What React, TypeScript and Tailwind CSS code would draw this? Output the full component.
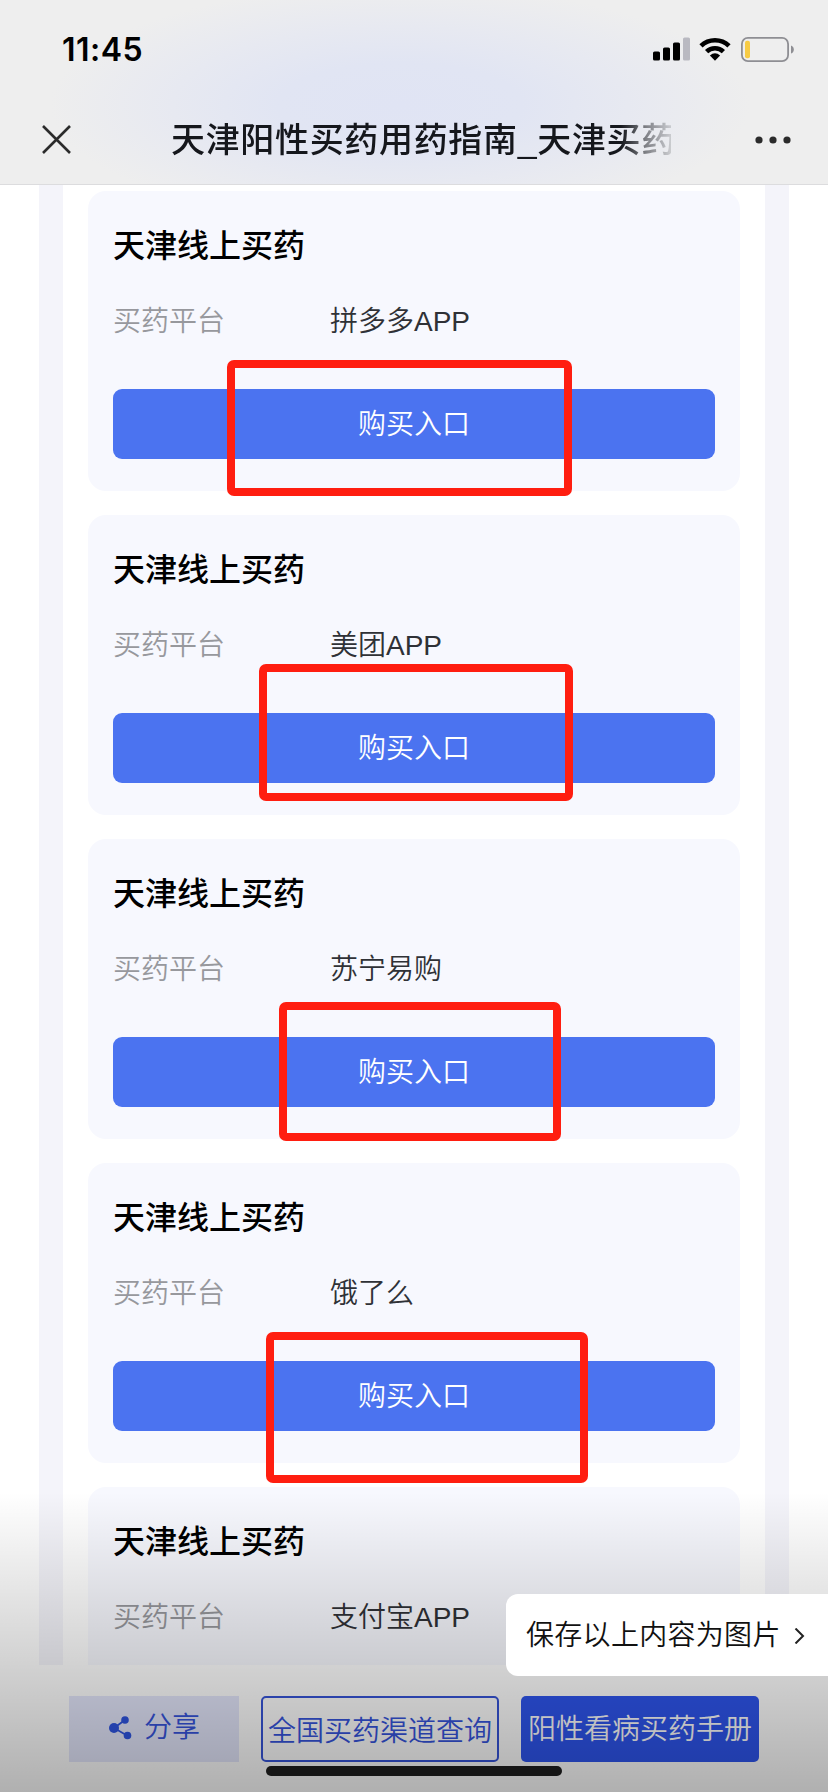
import React from 'react';

interface CardProps {
  platform: string;
  // frame drawn over the buy button
  mark?: string;
}

const cards: CardProps[] = [
  { platform: '拼多多APP', mark: 'left-[139px] top-[169px] w-[345px] h-[136px]' },
  { platform: '美团APP', mark: 'left-[171px] top-[149px] w-[314px] h-[137px]' },
  { platform: '苏宁易购', mark: 'left-[191px] top-[163px] w-[282px] h-[139px]' },
  { platform: '饿了么', mark: 'left-[178px] top-[169px] w-[322px] h-[151px]' },
  { platform: '支付宝APP' },
];

const StatusBar: React.FC = () => (
  <div className="flex h-[98px] items-center justify-between pl-[62px] pr-[34px]">
    <span className="pt-[2px] font-['Inter',sans-serif] text-[32px] font-semibold leading-none tracking-[0.5px] text-black">11:45</span>
    <div className="flex items-center">
      <svg className="h-6 w-7" viewBox="0 0 28 24">
        <rect x="0" y="14.5" width="7" height="9" rx="1.6" fill="#000" />
        <rect x="10" y="10.5" width="7" height="13" rx="1.6" fill="#000" />
        <rect x="20" y="5.5" width="7" height="18" rx="1.6" fill="#000" />
      </svg>
      <svg className="h-6 w-[10px]" viewBox="0 0 10 24">
        <rect x="2" y="0.5" width="7" height="23" rx="1.6" fill="#b9b9c1" />
      </svg>
      <svg className="ml-2 h-6 w-8" viewBox="0 0 32 24">
        <g fill="none" stroke="#000" strokeWidth="4.6">
          <path d="M2 8.9 A20 20 0 0 1 30 8.9" />
          <path d="M7.6 14.7 A12 12 0 0 1 24.4 14.7" />
        </g>
        <path d="M16 23.8 L10.9 18.5 Q16 14.2 21.1 18.5 Z" fill="#000" />
      </svg>
      <svg className="ml-[10px] h-[25px] w-[53px]" viewBox="0 0 53 25">
        <rect x="0.9" y="0.9" width="46.2" height="23.2" rx="6" fill="none" stroke="#8e8e93" strokeWidth="1.8" />
        <rect x="4" y="3.8" width="5" height="17.4" rx="2" fill="#f7cb45" />
        <path d="M50 8.5 Q52.8 9.5 52.8 12.5 Q52.8 15.5 50 16.5 Z" fill="#8e8e93" />
      </svg>
    </div>
  </div>
);

const NavBar: React.FC = () => (
  <div className="flex h-[83px] items-center">
    <svg className="ml-[42px] h-[29px] w-[29px]" viewBox="0 0 29 29" stroke="#2b2b2b" strokeWidth="2.6">
      <path d="M1 1 L28 28 M28 1 L1 28" />
    </svg>
    <div className="ml-[100px] w-[500px] overflow-hidden whitespace-nowrap pt-[2px] text-[34px] font-medium tracking-[0.67px] text-[#15171c] [mask-image:linear-gradient(to_right,#000_90%,rgba(0,0,0,0.5)_95%,rgba(0,0,0,0.15)_100%)]">
      天津阳性买药用药指南_天津买药
    </div>
    <svg className="ml-[84px] h-2 w-9" viewBox="0 0 36 8" fill="#2b2b2b">
      <circle cx="4" cy="4" r="3.6" />
      <circle cx="18" cy="4" r="3.6" />
      <circle cx="32" cy="4" r="3.6" />
    </svg>
  </div>
);

const Card: React.FC<CardProps> = ({ platform, mark }) => (
  <div className="relative h-[300px] shrink-0 rounded-[18px] bg-[#f7f8fe] px-[25px] pt-8">
    <h2 className="text-[32px] font-medium leading-[46px] text-black">天津线上买药</h2>
    <div className="mt-[33px] flex text-[28px] font-[350] leading-10">
      <span className="w-[217px] text-[#97989d]">买药平台</span>
      <span className="text-[#2f3136]">{platform}</span>
    </div>
    {mark && (
      <>
        <button className="mt-[47px] flex h-[70px] w-full items-center justify-center rounded-[9px] bg-[#4b73f0] pt-[2px] text-[28px] font-[350] text-white">
          购买入口
        </button>
        <div className={`absolute rounded-[7px] border-8 border-[#ff1e10] ${mark}`} />
      </>
    )}
  </div>
);

const ShareIcon: React.FC = () => (
  <svg className="h-6 w-[23px]" viewBox="0 0 23 24" fill="#2f55e2">
    <path d="M16 4 L5 12 L18 19.5" fill="none" stroke="#2f55e2" strokeWidth="1.8" />
    <circle cx="5" cy="12" r="5" />
    <circle cx="16" cy="4" r="3.8" />
    <circle cx="18.5" cy="19.5" r="3.8" />
  </svg>
);

const App: React.FC = () => {
  return (
    <div className="relative flex h-[1792px] w-[828px] flex-col overflow-hidden bg-white font-['Liberation_Sans','Noto_Sans_CJK_SC',sans-serif]">
      <header className="h-[185px] shrink-0 border-b border-[#dcdcde] bg-[#eeeeee] bg-[radial-gradient(ellipse_350px_120px_at_400px_105px,#e0e4f4_0%,#e1e5f3_35%,#e7e9f1_65%,#eeeeee00_100%)]">
        <StatusBar />
        <NavBar />
      </header>

      <main className="ml-[39px] flex h-[1480px] w-[750px] shrink-0 flex-col gap-6 overflow-hidden border-x-[24px] border-[#f4f4fa] px-[25px] pt-[6px]">
        {cards.map((card) => (
          <Card key={card.platform} {...card} />
        ))}
      </main>

      <footer className="flex gap-[22px] pl-[69px] pt-[31px] text-[28px] font-[350] text-[#3654dd]">
        <button className="flex h-[66px] w-[170px] items-center bg-[#e4e7fc] pb-[2px] pl-10">
          <ShareIcon />
          <span className="ml-3">分享</span>
        </button>
        <button className="flex h-[66px] w-[238px] items-center justify-center whitespace-nowrap rounded-[5px] border-2 border-[#3654d8] pt-[6px]">
          全国买药渠道查询
        </button>
        <button className="flex h-[66px] w-[238px] items-center justify-center whitespace-nowrap rounded-[5px] bg-[#2e55ee] pt-[2px] text-white">
          阳性看病买药手册
        </button>
      </footer>

      {/* Bottom shade */}
      <div className="pointer-events-none absolute inset-x-0 bottom-0 h-[300px] bg-linear-to-b from-black/0 to-black/31" />

      <button className="absolute bottom-[116px] right-0 flex h-[82px] w-[322px] items-center whitespace-nowrap rounded-l-[12px] bg-white pl-5 pt-[2px] text-[28px] font-[350] tracking-[0.3px] text-[#111]">
        保存以上内容为图片
        <svg className="ml-[13px] h-4 w-[11px]" viewBox="0 0 11 16" fill="none" stroke="#222" strokeWidth="2">
          <path d="M1.5 0.5 L9 8 L1.5 15.5" />
        </svg>
      </button>

      {/* Home indicator */}
      <div className="absolute bottom-4 left-[266px] h-[10px] w-[296px] rounded-full bg-[#161616]" />
    </div>
  );
};

export default App;
